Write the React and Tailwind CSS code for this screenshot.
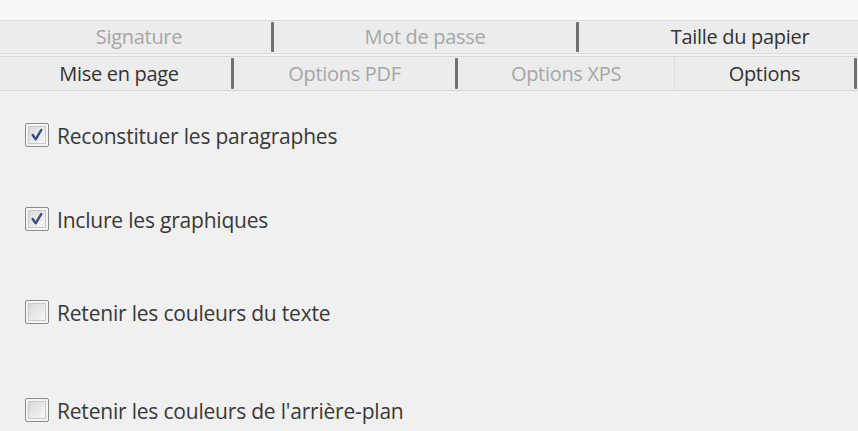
import React from "react";

const font = { fontFamily: '"Open Sans", "Noto Sans", Arial, sans-serif' };

function Sep() {
  return <div className="w-[3px] self-stretch my-[1px] bg-[#6f6f6f] rounded-[1px]" />;
}

function Tab({ w, label, active, sep = true, light = false }) {
  return (
    <div className={`flex h-full shrink-0 ${w}`}>
      <div
        className={`flex-1 flex items-center justify-center text-[20px] tracking-[-0.3px] ${
          active ? "text-[#333333]" : "text-[#a6a6a6]"
        }`}
      >
        {label}
      </div>
      {sep ? <Sep /> : light ? <div className="w-px self-stretch bg-[#dedede]" /> : null}
    </div>
  );
}

function Checkbox({ checked }) {
  return (
    <div className="w-[24px] h-[24px] shrink-0 border-[1.5px] border-[#8c8c8c] rounded-[2px] bg-[#f4f4f4] p-[2px]">
      <div className="w-full h-full border border-[#c9c9c9] bg-gradient-to-br from-[#d9d9d9] to-[#f7f7f7] flex items-center justify-center">
        {checked && (
          <svg width="14" height="14" viewBox="0 0 13 13">
            <path
              d="M2.5 6.5 L5.3 10.5 L10.5 1.8"
              fill="none"
              stroke="#3b4a82"
              strokeWidth="2.2"
              strokeLinecap="round"
              strokeLinejoin="round"
            />
          </svg>
        )}
      </div>
    </div>
  );
}

function Option({ checked, label, mt }) {
  return (
    <div className={`flex items-center gap-[8px] ${mt}`}>
      <Checkbox checked={checked} />
      <span className="text-[21px] tracking-[-0.2px] text-[#383838] leading-none pt-[3px]">{label}</span>
    </div>
  );
}

export default function App() {
  return (
    <div className="w-[858px] h-[431px] bg-[#f0f0f0] overflow-hidden" style={font}>
      <div className="h-[20px] bg-[#f8f8f8]" />
      <div className="h-[34px] pl-[7px] flex border-t border-b border-[#dcdcdc] bg-[#ececec] overflow-hidden">
        <Tab w="w-[267px]" label="Signature" />
        <Tab w="w-[305px]" label="Mot de passe" />
        <Tab w="w-[322px]" label="Taille du papier" active sep={false} />
      </div>
      <div className="h-[2px] bg-[#f3f3f3]" />
      <div className="h-[35px] pl-[7px] flex border-t border-b border-[#d9d9d9] bg-[#ececec]">
        <Tab w="w-[227px]" label="Mise en page" active />
        <Tab w="w-[224px]" label="Options PDF" />
        <Tab w="w-[217px]" label="Options XPS" sep={false} light />
        <Tab w="w-[182px]" label="Options" active />
      </div>
      <div className="pl-[25px] flex flex-col">
        <Option checked mt="mt-[32px]" label="Reconstituer les paragraphes" />
        <Option checked mt="mt-[60px]" label="Inclure les graphiques" />
        <Option mt="mt-[69px]" label="Retenir les couleurs du texte" />
        <Option mt="mt-[74px]" label="Retenir les couleurs de l'arrière-plan" />
      </div>
    </div>
  );
}
